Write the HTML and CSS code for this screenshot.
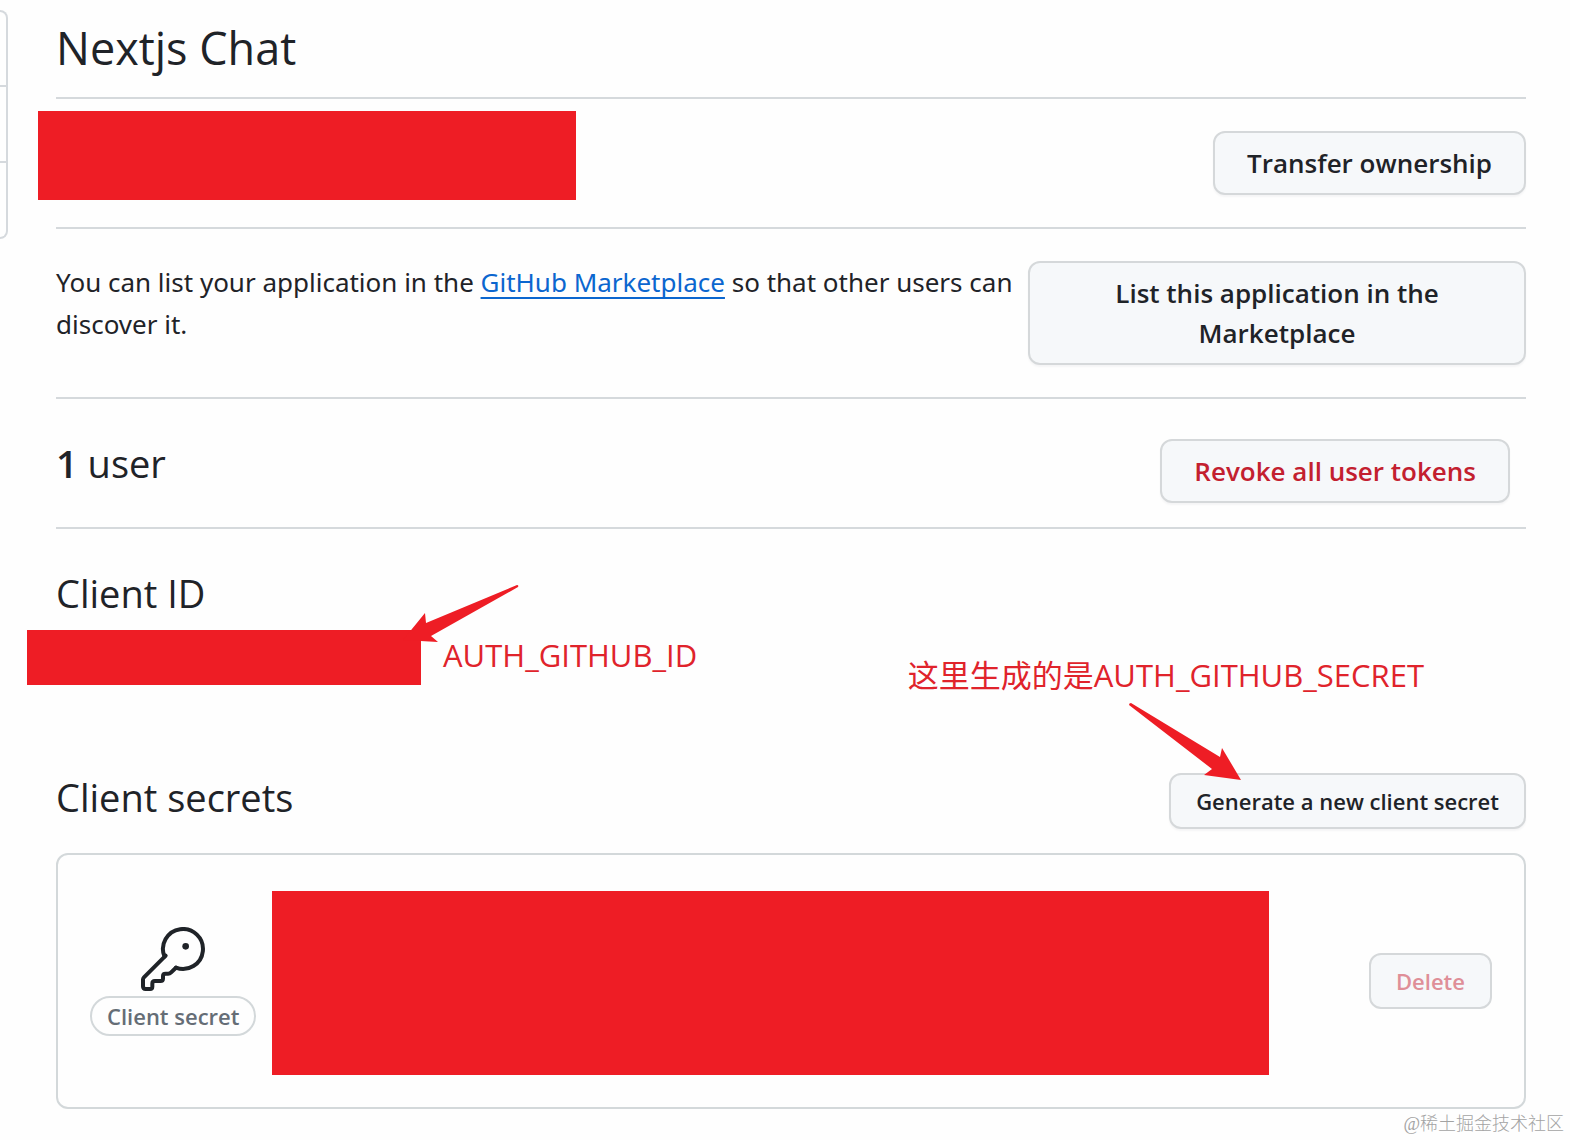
FILE: index.html
```html
<!DOCTYPE html>
<html lang="en">
<head>
<meta charset="utf-8">
<title>Nextjs Chat</title>
<link rel="stylesheet" href="styles.css">
</head>
<body>
<div class="page">
  <nav class="side-menu" aria-label="Settings">
    <div class="side-item"></div>
    <div class="side-item"></div>
    <div class="side-item"></div>
  </nav>
  <main class="content">
    <h1 class="title">Nextjs Chat</h1>

    <section class="row row-owner">
      <div class="mask mask-owner"></div>
      <button class="btn" type="button">Transfer ownership</button>
    </section>

    <section class="row">
      <p class="lead">You can list your application in the <a class="link" href="#marketplace">GitHub Marketplace</a> so that other users can discover it.</p>
      <button class="btn btn-wide" type="button">List this application in the Marketplace</button>
    </section>

    <section class="row row-users">
      <h2 class="subtitle"><strong class="count">1</strong> user</h2>
      <button class="btn btn-danger" type="button">Revoke all user tokens</button>
    </section>

    <section class="client-id">
      <h2 class="subtitle">Client ID</h2>
      <div class="id-line">
        <div class="mask mask-id"></div>
        <span class="note">AUTH_GITHUB_ID</span>
      </div>
      <svg class="arrow arrow-id" width="116" height="60" viewBox="0 0 116 60" aria-hidden="true">
        <path d="M114 0Q116 0 115 2L28 51L35 57L0 55L22 28L23 38Z"/>
      </svg>
    </section>

    <section class="client-secrets">
      <div class="secrets-head">
        <h2 class="subtitle">Client secrets</h2>
        <button class="btn btn-small" type="button">Generate a new client secret</button>
        <span class="note note-secret">这里生成的是AUTH_GITHUB_SECRET</span>
        <svg class="arrow arrow-secret" width="112" height="77" viewBox="0 0 112 77" aria-hidden="true">
          <path d="M2 0Q0 0 0 2L83 66L75 72L112 77L93 45L91 54Z"/>
        </svg>
      </div>
      <div class="card">
        <div class="secret-kind">
          <svg class="key" width="64" height="64" viewBox="0 0 24 24" aria-hidden="true">
            <path class="key-line" d="M9.25 10.75 1.1 18.9Q.75 19.25 .75 19.7V22.25Q.75 23.25 1.75 23.25H3.4Q4.25 23.25 4.25 22.4V21.2Q4.25 20.25 5.2 20.25H7.3Q8.25 20.25 8.25 19.3V18.4Q8.25 17.5 9.2 17.5H10.2Q10.8 17.5 11.2 17.1L13.1 15.27"/>
            <path class="key-line" d="M13.1 15.27A7.5 7.5 0 1 0 8.8 11.1"/>
            <circle cx="16.75" cy="7.25" r="1.25"/>
          </svg>
          <span class="pill">Client secret</span>
        </div>
        <div class="mask mask-secret"></div>
        <button class="btn btn-small btn-danger" type="button" disabled>Delete</button>
      </div>
    </section>
  </main>
  <span class="watermark">@稀土掘金技术社区</span>
</div>
</body>
</html>
```
FILE: styles.css
```css
* { box-sizing: border-box; }

body {
  margin: 0;
  background: #fefefe;
  color: #1f2328;
  font: 26px/42px "Open Sans", "Noto Sans", "Noto Sans CJK SC", sans-serif;
}

.page {
  position: relative;
  display: flex;
  min-height: 1140px;
}

.side-menu {
  flex: none;
  align-self: flex-start;
  width: 8px;
  margin-top: 10px;
  border: 2px solid #d5d9dd;
  border-left: 0;
  border-radius: 0 12px 12px 0;
}
.side-item { height: 73px; }
.side-item + .side-item { height: 76px; border-top: 2px solid #d5d9dd; }

.content {
  flex: 1;
  min-width: 0;
  padding: 0 44px 0 48px;
}

h1, h2, p { margin: 0; font-weight: 400; }

.title {
  padding: 16px 0 17px;
  font-size: 45px;
  line-height: 64px;
}

.row {
  position: relative;
  display: flex;
  justify-content: space-between;
  align-items: flex-start;
  padding: 32px 0;
  border-top: 2px solid #d5d9dc;
}
.row-owner { justify-content: flex-end; }
.row-users {
  padding: 40px 16px 24px 0;
  border-bottom: 2px solid #d5d9dc;
}

.lead {
  flex: 1;
  font-family: "Noto Sans", "Open Sans", sans-serif;
}
.link {
  color: #0b66cf;
  text-decoration: underline 2px;
  text-underline-offset: 5px;
  text-decoration-skip-ink: none;
}

.subtitle {
  font-size: 38px;
  line-height: 48px;
}
.count { font-weight: 600; }

.btn {
  flex: none;
  padding: 10px 32px;
  border: 2px solid #d5d8da;
  border-radius: 12px;
  background: #f6f8fa;
  box-shadow: 0 2px 2px #1f23280a;
  color: #1f2328;
  font: 600 26px/40px "Open Sans", "Noto Sans", sans-serif;
}
.btn-wide { width: 498px; }
.btn-small {
  padding: 6px 25px;
  font-size: 22px;
}
.btn-danger { color: #c3202f; }
.btn-danger:disabled { color: #df8f98; box-shadow: none; }

.mask { background: #ee1d25; }
.mask-owner {
  position: absolute;
  top: 12px;
  left: -18px;
  width: 538px;
  height: 89px;
}

.client-id {
  position: relative;
  padding: 40px 0 88px;
}
.id-line {
  display: flex;
  gap: 22px;
  margin: 13px 0 0 -29px;
}
.mask-id { width: 394px; height: 55px; }

.note {
  color: #e0232b;
  font-size: 31px;
  line-height: 50px;
  white-space: nowrap;
}
.note-secret {
  position: absolute;
  right: 102px;
  bottom: 129px;
}

.arrow { position: absolute; fill: #ee1d25; }
.arrow-id { top: 56px; left: 347px; }
.arrow-secret { top: -70px; right: 285px; }

.secrets-head {
  position: relative;
  display: flex;
  justify-content: space-between;
  align-items: flex-start;
}

.card {
  display: flex;
  align-items: center;
  margin-top: 24px;
  padding: 32px;
  border: 2px solid #d3d8da;
  border-radius: 12px;
}
.secret-kind {
  display: flex;
  flex-direction: column;
  align-items: center;
  gap: 5px;
}
.key { fill: #1f2328; }
.key-line {
  fill: none;
  stroke: #1f2328;
  stroke-width: 1.5;
  stroke-linecap: round;
}
.pill {
  padding: 0 15px;
  border: 2px solid #d3d8da;
  border-radius: 20px;
  color: #656d76;
  font-size: 22px;
  font-weight: 600;
  line-height: 36px;
}
.mask-secret {
  flex: 1;
  height: 184px;
  margin: 4px 100px 0 16px;
}

.watermark {
  position: absolute;
  right: 6px;
  bottom: 3px;
  color: #a3a3a3;
  font: 300 18px/26px "Liberation Serif", "Noto Sans CJK SC", serif;
}
```
